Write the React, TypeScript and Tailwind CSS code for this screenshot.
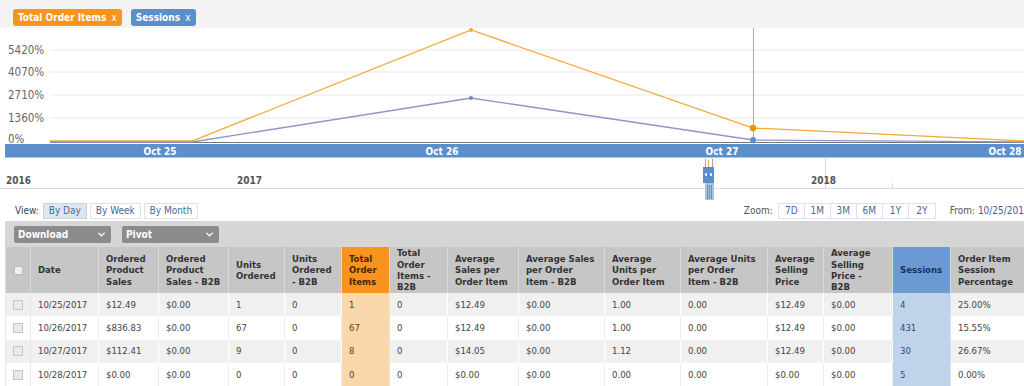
import { ChevronDown } from "lucide-react";

type Col = { w: number; lines: string[]; hl?: "orange" | "blue" };

// column widths measured off the grid
const cols: Col[] = [
  { w: 25, lines: [] },
  { w: 68, lines: ["Date"] },
  { w: 60, lines: ["Ordered", "Product", "Sales"] },
  { w: 70, lines: ["Ordered", "Product", "Sales - B2B"] },
  { w: 56, lines: ["Units", "Ordered"] },
  { w: 57, lines: ["Units", "Ordered", "- B2B"] },
  { w: 48, lines: ["Total", "Order", "Items"], hl: "orange" },
  { w: 58, lines: ["Total", "Order", "Items -", "B2B"] },
  { w: 71, lines: ["Average", "Sales per", "Order Item"] },
  { w: 86, lines: ["Average Sales", "per Order", "Item - B2B"] },
  { w: 76, lines: ["Average", "Units per", "Order Item"] },
  { w: 87, lines: ["Average Units", "per Order", "Item - B2B"] },
  { w: 56, lines: ["Average", "Selling", "Price"] },
  { w: 69, lines: ["Average", "Selling", "Price -", "B2B"] },
  { w: 58, lines: ["Sessions"], hl: "blue" },
  { w: 95, lines: ["Order Item", "Session", "Percentage"] },
];

const rows: string[][] = [
  ["10/25/2017", "$12.49", "$0.00", "1", "0", "1", "0", "$12.49", "$0.00", "1.00", "0.00", "$12.49", "$0.00", "4", "25.00%"],
  ["10/26/2017", "$836.83", "$0.00", "67", "0", "67", "0", "$12.49", "$0.00", "1.00", "0.00", "$12.49", "$0.00", "431", "15.55%"],
  ["10/27/2017", "$112.41", "$0.00", "9", "0", "8", "0", "$14.05", "$0.00", "1.12", "0.00", "$12.49", "$0.00", "30", "26.67%"],
  ["10/28/2017", "$0.00", "$0.00", "0", "0", "0", "0", "$0.00", "$0.00", "0.00", "0.00", "$0.00", "$0.00", "5", "0.00%"],
];

const yTicks = [
  { y: 50, label: "5420%" },
  { y: 72, label: "4070%" },
  { y: 95, label: "2710%" },
  { y: 118, label: "1360%" },
];

function Chart() {
  const font = "DejaVu Sans Condensed, DejaVu Sans, sans-serif";
  return (
    <svg width={1024} height={172} viewBox="0 28 1024 172" className="block">
      {/* grid */}
      {yTicks.map((t) => (
        <g key={t.label}>
          <line x1={50} x2={1024} y1={t.y} y2={t.y} stroke="#e8e8e8" />
          <text x={8} y={t.y + 4} fontSize={11.5} fill="#666" fontFamily={font}>
            {t.label}
          </text>
        </g>
      ))}
      <text x={8} y={143} fontSize={11.5} fill="#666" fontFamily={font}>
        0%
      </text>
      <line x1={50} x2={1024} y1={142.5} y2={142.5} stroke="#777" />

      {/* hover line */}
      <line x1={753.5} x2={753.5} y1={28} y2={144} stroke="#f28a98" />

      {/* series */}
      <polyline
        points="50,141 192,141 471,30 753,128 1024,141"
        fill="none"
        stroke="#f5a83a"
        strokeWidth={1.3}
      />
      <polyline
        points="50,142 192,142 471,98 753,140 1024,142"
        fill="none"
        stroke="#8e96c6"
        strokeWidth={1.3}
      />
      <circle cx={471} cy={30} r={2} fill="#f5a83a" />
      <circle cx={471} cy={98} r={2} fill="#6f86c2" />
      <circle cx={753} cy={128} r={3.2} fill="#f39200" />
      <circle cx={753} cy={140} r={3} fill="#5b8ed6" />

      {/* x axis band */}
      <rect x={5} y={144} width={1019} height={13.5} fill="#5b8fcb" />
      {[
        { x: 160, t: "Oct 25" },
        { x: 442, t: "Oct 26" },
        { x: 722, t: "Oct 27" },
        { x: 1005, t: "Oct 28" },
      ].map((l) => (
        <text
          key={l.t}
          x={l.x}
          y={154.5}
          fontSize={10}
          fontWeight="bold"
          fill="#fff"
          textAnchor="middle"
          fontFamily={font}
        >
          {l.t}
        </text>
      ))}

      {/* navigator */}
      <line x1={0} x2={1024} y1={188.5} y2={188.5} stroke="#dcdcdc" />
      <line x1={825.5} x2={825.5} y1={158} y2={188} stroke="#d8d8d8" />
      <line x1={892.5} x2={892.5} y1={183} y2={188} stroke="#d8d8d8" />
      {[
        { x: 6, t: "2016" },
        { x: 237, t: "2017" },
        { x: 811, t: "2018" },
      ].map((l) => (
        <text key={l.t} x={l.x} y={184} fontSize={10} fontWeight="bold" fill="#555" fontFamily={font}>
          {l.t}
        </text>
      ))}
      <line x1={705.5} x2={705.5} y1={159} y2={167} stroke="#9aa8bd" />
      <line x1={712.5} x2={712.5} y1={159} y2={167} stroke="#9aa8bd" />
      <line x1={708.5} x2={708.5} y1={160} y2={170} stroke="#f3a23a" />
      <rect x={703} y={167} width={11} height={16} fill="#5b8ecb" />
      <rect x={705} y={173} width={2} height={3} fill="#e8f0fa" />
      <rect x={710} y={173} width={2} height={3} fill="#e8f0fa" />
      <rect x={705} y={183} width={9} height={17} fill="#a9c3e3" />
      <line x1={707.5} x2={707.5} y1={185} y2={199} stroke="#5b8ecb" />
      <line x1={709.5} x2={709.5} y1={185} y2={199} stroke="#5b8ecb" />
      <line x1={711.5} x2={711.5} y1={185} y2={199} stroke="#5b8ecb" />
    </svg>
  );
}

export default function App() {
  return (
    <div className="w-[1024px] h-[386px] overflow-hidden bg-white font-['DejaVu_Sans_Condensed','DejaVu_Sans',sans-serif] text-[#333]">
      {/* SERIES TAGS */}
      <div className="h-[28px] bg-[#f3f3f3] flex items-start gap-[9px] pl-[13px] pt-[9px]">
        <span className="h-[17px] px-[5px] rounded-[3px] bg-[#f7941e] text-white text-[10px] font-bold leading-[17px]">
          Total Order Items <span className="ml-[2px] font-normal">x</span>
        </span>
        <span className="h-[17px] px-[5px] rounded-[3px] bg-[#5b8fcb] text-white text-[10px] font-bold leading-[17px]">
          Sessions <span className="ml-[2px] font-normal">x</span>
        </span>
      </div>

      {/* CHART */}
      <Chart />

      {/* VIEW + ZOOM */}
      <div className="h-[21px] flex items-center text-[10px]">
        <span className="ml-[15px] mr-[4px] text-[#444]">View:</span>
        <div className="flex gap-[3px]">
          <span className="h-[16px] w-[44px] leading-[14px] text-center border border-[#c9d2dd] bg-[#dfe6ee] text-[#3f6b9c]">
            By Day
          </span>
          <span className="h-[16px] w-[51px] leading-[14px] text-center border border-[#dde2e8] bg-white text-[#3f6b9c]">
            By Week
          </span>
          <span className="h-[16px] w-[54px] leading-[14px] text-center border border-[#dde2e8] bg-white text-[#3f6b9c]">
            By Month
          </span>
        </div>
        <span className="ml-[546px] mr-[5px] text-[#555]">Zoom:</span>
        <div className="flex border border-[#dde2e8] h-[16px]">
          {["7D", "1M", "3M", "6M", "1Y", "2Y"].map((z, i) => (
            <span
              key={z}
              className={
                "w-[26px] leading-[14px] text-center text-[#3f6b9c] " +
                (i < 5 ? "border-r border-[#dde2e8]" : "")
              }
            >
              {z}
            </span>
          ))}
        </div>
        <span className="ml-[14px] whitespace-nowrap text-[#555]">
          From: <span className="text-[#3f5f9c]">10/25/2017</span>
        </span>
      </div>

      {/* TOOLBAR */}
      <div className="ml-[5px] h-[26px] bg-[#d6d6d6] flex items-center gap-[11px] pl-[9px]">
        {[
          { t: "Download", w: "w-[97px]" },
          { t: "Pivot", w: "w-[97px]" },
        ].map((d) => (
          <div
            key={d.t}
            className={
              d.w +
              " h-[17px] rounded-[2px] bg-[#8c8c8c] flex items-center justify-between px-[4px] text-white text-[10px] font-bold"
            }
          >
            {d.t}
            <ChevronDown size={11} strokeWidth={3} />
          </div>
        ))}
      </div>

      {/* TABLE */}
      <table className="ml-[5px] table-fixed border-collapse text-[9.5px]" style={{ width: 1019 + 21 }}>
        <colgroup>
          {cols.map((c, i) => (
            <col key={i} style={{ width: c.w }} />
          ))}
        </colgroup>
        <thead>
          <tr className="h-[46px]">
            {cols.map((c, i) => (
              <th
                key={i}
                className={
                  "p-0 pl-[7px] text-left align-middle font-bold leading-[11.3px] border-x border-[#dadada] " +
                  (c.hl === "orange"
                    ? "bg-[#f7941e] text-[#4a2600]"
                    : c.hl === "blue"
                    ? "bg-[#6b9bd2] text-[#16345e]"
                    : "bg-[#c6c6c6] text-[#333]")
                }
              >
                {i === 0 ? (
                  <span className="block w-[9px] h-[9px] ml-[1px] bg-[#eeeeee] border border-[#bbb]" />
                ) : (
                  <div className="max-h-[46px] overflow-hidden">
                    {c.lines.map((l) => (
                      <div key={l} className="whitespace-nowrap">
                        {l}
                      </div>
                    ))}
                  </div>
                )}
              </th>
            ))}
          </tr>
        </thead>
        <tbody>
          {rows.map((r, ri) => (
            <tr key={ri} className={"h-[23.4px] " + (ri % 2 === 0 ? "bg-[#f0f0f0]" : "bg-white")}>
              <td className="p-0 pl-[7px] border-x border-[#e6e6e6]">
                <span className="block w-[10px] h-[10px] bg-[#e9e9e9] border border-[#c4c4c4]" />
              </td>
              {r.map((v, ci) => {
                const c = cols[ci + 1];
                return (
                  <td
                    key={ci}
                    className={
                      "p-0 pl-[7px] whitespace-nowrap border-x " +
                      (c.hl === "orange"
                        ? "bg-[#fad8ab] border-[#f3e4cf] text-[#5a4020]"
                        : c.hl === "blue"
                        ? "bg-[#bfd3ea] border-[#d4e1f0] text-[#2b4a78]"
                        : ri % 2 === 0
                        ? "border-white text-[#444]"
                        : "border-[#ececec] text-[#444]")
                    }
                  >
                    {v}
                  </td>
                );
              })}
            </tr>
          ))}
        </tbody>
      </table>
    </div>
  );
}
